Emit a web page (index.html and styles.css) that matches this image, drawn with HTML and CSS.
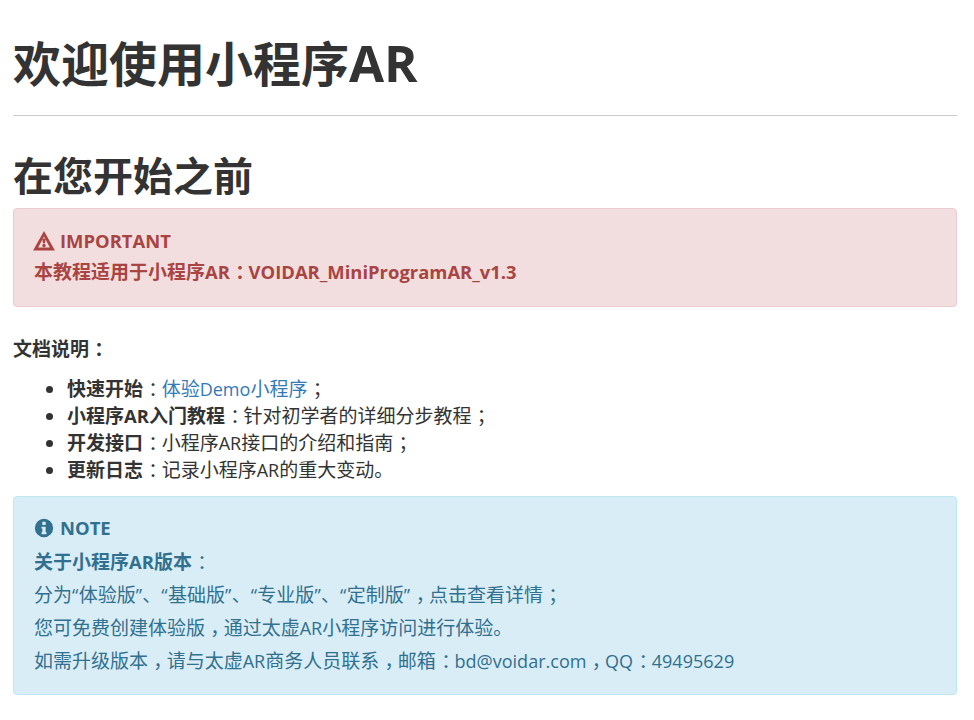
FILE: index.html
```html
<!DOCTYPE html>
<html lang="zh-CN">
<head>
<meta charset="utf-8">
<title>欢迎使用小程序AR</title>
<link rel="stylesheet" href="styles.css">
</head>
<body>
<h1 class="page-title">欢迎使用小程序<span class="en">AR</span></h1>
<h2 class="section-title">在您开始之前</h2>
<div class="alert alert-danger">
  <p class="alert-head"><svg class="icon" viewBox="0 0 24 22"><path fill-rule="evenodd" d="M12 0 24 21.5H0ZM12 6 5.6 18.2H18.4ZM10.3 8.2H13.7L13.3 13.4H10.7ZM12 14a1.9 1.9 0 1 1 0 3.8a1.9 1.9 0 1 1 0-3.8Z"/></svg><strong class="en">IMPORTANT</strong></p>
  <p class="alert-line line-tight"><strong>本教程适用于小程序<span class="en">AR</span><span class="pn">：</span><span class="en">VOIDAR_MiniProgramAR_v1.3</span></strong></p>
</div>
<p class="doc-label"><strong>文档说明<span class="pn">：</span></strong></p>
<ul class="doc-list">
  <li><strong>快速开始</strong><span class="pn">：</span><a href="#">体验<span class="en">Demo</span>小程序</a><span class="pn">；</span></li>
  <li><strong>小程序<span class="en">AR</span>入门教程</strong><span class="pn">：</span>针对初学者的详细分步教程<span class="pn">；</span></li>
  <li><strong>开发接口</strong><span class="pn">：</span>小程序<span class="en">AR</span>接口的介绍和指南<span class="pn">；</span></li>
  <li><strong>更新日志</strong><span class="pn">：</span>记录小程序<span class="en">AR</span>的重大变动。</li>
</ul>
<div class="alert alert-info">
  <p class="alert-head"><svg class="icon icon-info" viewBox="0 0 24 24"><path fill-rule="evenodd" d="M12 1a11 11 0 1 1 0 22a11 11 0 1 1 0-22ZM10 4.5V8.5H14V4.5ZM9 10.5V12.5H10V17H9V19.5H15V17H14V10.5Z"/></svg><strong class="en">NOTE</strong></p>
  <p class="alert-line"><strong>关于小程序<span class="en">AR</span>版本</strong><span class="pn">：</span></p>
  <p class="alert-line">分为<span class="en qt">“</span>体验版<span class="en qt">”</span>、<span class="en qt">“</span>基础版<span class="en qt">”</span>、<span class="en qt">“</span>专业版<span class="en qt">”</span>、<span class="en qt">“</span>定制版<span class="en qt">”</span><span class="pn">，</span>点击查看详情<span class="pn">；</span></p>
  <p class="alert-line">您可免费创建体验版<span class="pn">，</span>通过太虚<span class="en">AR</span>小程序访问进行体验。</p>
  <p class="alert-line">如需升级版本<span class="pn">，</span>请与太虚<span class="en">AR</span>商务人员联系<span class="pn">，</span>邮箱<span class="pn">：</span><span class="en">bd@voidar.com</span><span class="pn">，</span><span class="en">QQ</span><span class="pn">：</span><span class="en">49495629</span></p>
</div>
</body>
</html>
```
FILE: styles.css
```css
* { box-sizing: border-box; }
html { background: #fff; }
body {
  margin: 0;
  padding: 0 17px 0 13px;
  font-family: "Noto Sans CJK SC", sans-serif;
  font-size: 19px;
  line-height: 1.42857;
  color: #333;
}
p { margin: 0; }
.en { font-family: "Open Sans", sans-serif; font-size: 0.95em; line-height: 0; }
strong .en, strong.en { font-size: 0.97em; }
.alert-head .en { line-height: inherit; }
.qt { padding-right: 0.02em; }
.pn { font-feature-settings: "halt" 1; padding: 0 0.2em 0 0.28em; line-height: 0; }
.page-title {
  margin: 0;
  padding: 28px 0 21px;
  border-bottom: 1px solid #ccc;
  font-size: 48px;
  line-height: 66px;
  font-weight: 700;
}
.page-title .en { font-size: 1.06em; }
.section-title {
  margin: 0;
  padding-top: 31px;
  font-size: 40px;
  line-height: 54px;
  font-weight: 700;
}
.alert {
  border: 1px solid;
  border-radius: 4px;
  padding: 15px 20px;
}
.alert-danger {
  margin-top: 7px;
  height: 99px;
  background: #f2dede;
  border-color: #ebccd1;
  color: #a94442;
}
.alert-info {
  margin-top: 14px;
  height: 199px;
  padding-top: 14px;
  background: #d9edf7;
  border-color: #bce8f1;
  color: #31708f;
}
.alert-head, .alert-line { line-height: 33px; }
.alert-head { display: flex; align-items: center; gap: 5px; }
.line-tight { line-height: 28px; }
.icon { width: 22px; height: 20px; fill: currentColor; flex: none; margin-left: -1px; }
.icon-info { width: 20px; margin-left: 0; margin-right: 1px; }
.doc-label { margin-top: 28px; line-height: 26px; }
.doc-list { margin: 13px 0 0; padding: 0 0 0 54px; }
.doc-list li { line-height: 27px; }
a { color: #337ab7; text-decoration: none; }
```
